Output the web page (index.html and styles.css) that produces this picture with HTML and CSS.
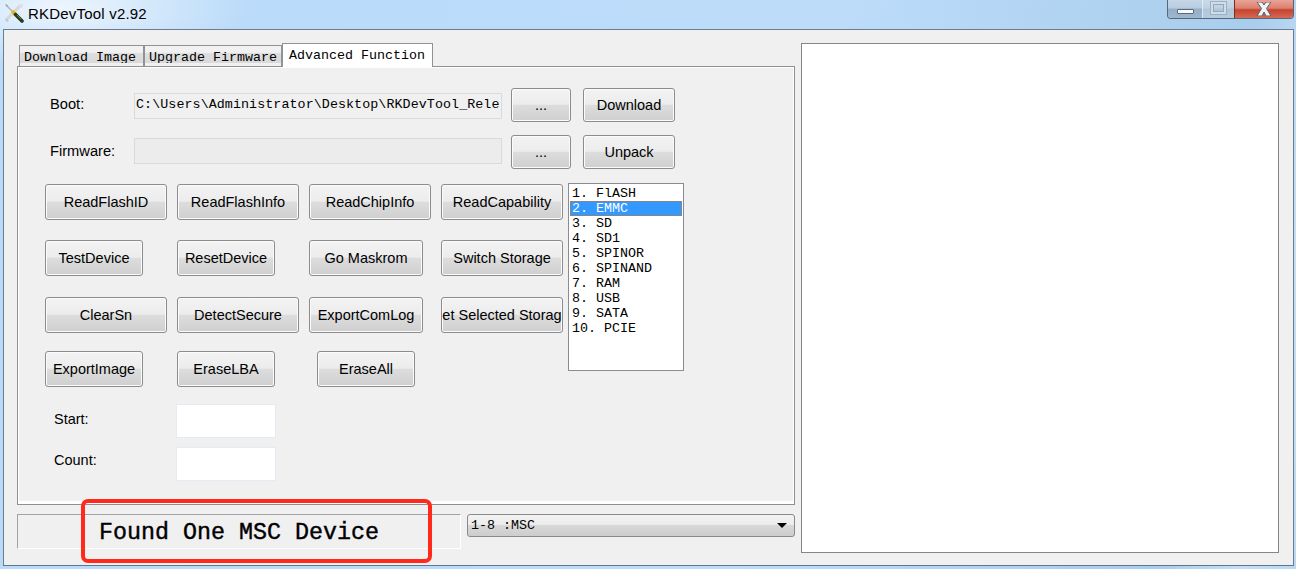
FILE: index.html
```html
<!DOCTYPE html>
<html lang="en">
<head>
<meta charset="utf-8">
<title>RKDevTool v2.92</title>
<link rel="stylesheet" href="styles.css">
</head>
<body>
<div class="desktop">
  <header class="titlebar">
    <svg class="app-icon" width="20" height="20" viewBox="0 0 20 20">
      <path d="M17 2 L3 16" stroke="#d6d8d5" stroke-width="3"/>
      <path d="M19 1 L15 2 L15 5 L18 5 Z" fill="#dcdedb"/>
      <path d="M1 17 L3 19 L5 18 L2 15 Z" fill="#c6c8c4"/>
      <path d="M2 2 L9 9" stroke="#b4b7b4" stroke-width="1.600"/>
      <path d="M1 1 L4 2 L3 4 Z" fill="#a2a5a2"/>
      <path d="M8 8 L12 12" stroke="#e2b62a" stroke-width="3.600"/>
      <path d="M11.500 11.500 L18 18" stroke="#2d3a22" stroke-width="3.600" stroke-linecap="round"/>
      <path d="M13 12 L17 16" stroke="#6f8a3a" stroke-width="1"/>
    </svg>
    <span class="app-title">RKDevTool v2.92</span>
    <div class="caption">
      <div class="cap cap-min"><span class="min-glyph"></span></div>
      <div class="cap cap-max"><span class="max-glyph"></span></div>
      <div class="cap cap-close">
        <svg width="20" height="14" viewBox="0 0 20 14"><path d="M3 0 H8 L10 3 L12 0 H17 L12.500 6.500 L17 14 H12 L10 10 L8 14 H3 L7.500 6.500 Z" fill="#f3f3f3" stroke="#56606c" stroke-width="1"/></svg>
      </div>
    </div>
  </header>

  <main class="window">
    <section class="left">
      <nav class="tabs">
        <div class="tab tab-download"><span class="tab-face">Download Image</span></div>
        <div class="tab tab-upgrade"><span class="tab-face">Upgrade Firmware</span></div>
        <div class="tab tab-active">Advanced Function</div>
      </nav>
      <div class="panel">
        <div class="file-row file-row-boot">
          <label class="lbl">Boot:</label>
          <div class="path">C:\Users\Administrator\Desktop\RKDevTool_Rele</div>
          <button class="btn">...</button>
          <button class="btn">Download</button>
        </div>
        <div class="file-row file-row-fw">
          <label class="lbl">Firmware:</label>
          <div class="path path-fw"></div>
          <button class="btn">...</button>
          <button class="btn">Unpack</button>
        </div>

        <div class="commands">
          <div class="cmd-grid">
            <button class="btn w122">ReadFlashID</button>
            <button class="btn w122">ReadFlashInfo</button>
            <button class="btn w122">ReadChipInfo</button>
            <button class="btn w122">ReadCapability</button>
            <button class="btn w98">TestDevice</button>
            <button class="btn w98">ResetDevice</button>
            <button class="btn w114">Go Maskrom</button>
            <button class="btn w122">Switch Storage</button>
            <button class="btn w122">ClearSn</button>
            <button class="btn w122">DetectSecure</button>
            <button class="btn w114">ExportComLog</button>
            <button class="btn w122">et Selected Storag</button>
            <button class="btn w98">ExportImage</button>
            <button class="btn w98">EraseLBA</button>
            <button class="btn w98 inset8">EraseAll</button>
          </div>
          <ul class="listbox">
            <li class="opt">1. FlASH</li>
            <li class="opt opt-selected">2. EMMC</li>
            <li class="opt">3. SD</li>
            <li class="opt">4. SD1</li>
            <li class="opt">5. SPINOR</li>
            <li class="opt">6. SPINAND</li>
            <li class="opt">7. RAM</li>
            <li class="opt">8. USB</li>
            <li class="opt">9. SATA</li>
            <li class="opt">10. PCIE</li>
          </ul>
        </div>

        <div class="lba">
          <label class="lbl-lba lbl-start">Start:</label>
          <div class="lba-input"></div>
          <label class="lbl-lba lbl-count">Count:</label>
          <div class="lba-input"></div>
        </div>
      </div>

      <div class="statusrow">
        <div class="status">Found One MSC Device</div>
        <div class="combo">
          <span>1-8 :MSC</span>
          <span class="arrow"></span>
        </div>
      </div>
      <div class="annotation"></div>
    </section>

    <aside class="log"></aside>
  </main>
</div>
</body>
</html>
```
FILE: styles.css
```css
* { box-sizing: border-box; }
html, body { margin: 0; padding: 0; }
body { width: 1296px; height: 569px; overflow: hidden; font-family: "Liberation Sans", Arial, sans-serif; color: #000; }

.desktop {
  width: 1296px; height: 569px; display: flex; flex-direction: column;
  background:
    radial-gradient(ellipse 190px 60px at 60px 8px, rgba(255,255,255,.75), rgba(255,255,255,0) 100%),
    linear-gradient(100deg, #b9daf9 0%, #bcdcfa 60%, #a9cdec 90%, #c4dff6 96%, #b9d9f2 100%);
}

.titlebar { height: 29px; display: flex; align-items: flex-start; position: relative; flex: none; }
.app-icon { margin: 3px 0 0 4px; flex: none; }
.app-title { margin: 5px 0 0 4px; font-size: 15px; line-height: 18px; color: #000; letter-spacing: .2px; }

.caption { margin-left: auto; margin-right: 2px; display: flex; height: 19px; border: 1px solid #57687a; border-top: 0; border-radius: 0 0 4px 4px; overflow: hidden; flex: none; }
.cap { height: 18px; display: flex; align-items: center; justify-content: center; }
.cap-min { width: 35px; background: linear-gradient(#c5d7e6 0%, #b7ccdf 45%, #93aec7 50%, #9db7cf 100%); border-right: 1px solid #dfe9f2; }
.min-glyph { width: 17px; height: 5px; margin-top: 5px; background: #fafafa; border: 1px solid #5a6a7b; border-radius: 1px; }
.cap-max { width: 32px; background: linear-gradient(#c9dae8 0%, #bfd2e2 45%, #b0c6da 50%, #b6cbde 100%); border-right: 1px solid #7a2c22; }
.max-glyph { width: 17px; height: 14px; border: 1px solid #9fb0bf; box-shadow: inset 0 0 0 2px #d0dde8, inset 0 0 0 3px #93a8ba; margin-top: -2px; }
.cap-close { width: 58px; background: linear-gradient(#e8a598 0%, #dd7f6f 45%, #c5432d 55%, #d56a55 100%); }

.window {
  height: 537px; margin: 0 2px 3px 3px; flex: none;
  background: #f0f0f0; border: 1px solid #6c7c8e; border-bottom-color: #5f7690;
  display: flex; align-items: flex-start; padding: 13px 0 0 13px; gap: 6px;
}

.left { width: 778px; position: relative; flex: none; }

.tabs { display: flex; height: 23px; align-items: flex-end; padding-left: 2px; font-family: "Liberation Mono", monospace; font-size: 13.33px; }
.tab { border: 1px solid #8e9398; border-bottom: 0; height: 21px; white-space: nowrap; overflow: hidden; }
.tab-face { display: block; height: 17px; line-height: 24px; overflow: hidden; background: linear-gradient(#f3f3f3 0%, #efefef 38%, #dedede 42%, #d9d9d9 100%); }
.tab-download { width: 125px; }
.tab-download .tab-face { padding-left: 4px; }
.tab-upgrade { width: 138px; }
.tab-upgrade .tab-face { padding-left: 4px; }
.tab-active { width: 151px; height: 24px; background: #fff; line-height: 24px; padding-left: 6px; position: relative; z-index: 2; margin-bottom: -1px; }

.panel {
  height: 439px; border: 1px solid #8d9195; box-shadow: inset 1px 1px 0 #fff, inset -1px -3px 0 #fff;
  background: #f0f0f0; padding: 21px 0 0 27px; position: relative;
}

.file-row { display: grid; grid-template-columns: 84px 368px 69px 104px; height: 34px; margin-bottom: 13px; align-items: center; margin-left: 5px; }
.file-row-fw { margin-bottom: 15px; }
.file-row .btn:nth-of-type(1) { margin-left: 9px; width: 60px; }
.file-row .btn:last-child { margin-left: 12px; width: 92px; }
.lbl { font-size: 14.67px; margin-top: -2px; }
.path { height: 26px; border: 1px solid #dadada; background: #f0f0f0; font-family: "Liberation Mono", monospace; font-size: 13.33px; letter-spacing: .08px; line-height: 22px; padding-left: 1px; white-space: nowrap; overflow: hidden; margin-top: 2px; }
.path-fw { margin-top: -2px; background: #ececec; }

.btn {
  height: 34px; padding: 0; margin: 0; border: 1px solid #8c8c8c; border-radius: 3px;
  background: linear-gradient(#f3f3f3 0%, #ececec 48%, #dddddd 50%, #cfcfcf 100%);
  box-shadow: inset 0 0 0 1px #fbfbfb;
  font-family: "Liberation Sans", sans-serif; font-size: 14.5px; color: #000;
  display: flex; align-items: center; justify-content: center; white-space: nowrap; overflow: hidden;
}

.commands { display: flex; align-items: flex-start; }
.cmd-grid { display: grid; grid-template-columns: repeat(4, 122px); column-gap: 10px; grid-template-rows: 56px 57px 54px 36px; width: 518px; flex: none; }
.cmd-grid .btn { height: 36px; }
.w122 { width: 122px; }
.w114 { width: 114px; }
.w98 { width: 98px; }
.inset8 { margin-left: 8px; }

.listbox { list-style: none; width: 116px; height: 188px; margin: -1px 0 0 5px; padding: 2px 1px 0 1px; background: #fff; border: 1px solid #8b8b94; font-family: "Liberation Mono", monospace; font-size: 13.33px; flex: none; }
.opt { height: 15px; line-height: 15.500px; padding-left: 2px; white-space: pre; }
.opt-selected { background: #3399ff; color: #fff; outline: 1px dotted #d9730d; outline-offset: -1px; }

.lba { display: grid; grid-template-columns: 122px 100px; grid-template-rows: 34px 34px; row-gap: 9px; margin-top: 17px; margin-left: 9px; align-items: center; width: 222px; }
.lbl-lba { font-size: 14.5px; }
.lbl-start { margin-top: -4px; }
.lbl-count { margin-top: -8px; }
.lba-input { height: 34px; background: #fff; border: 1px solid #e4ebf2; }

.statusrow { display: flex; margin-top: 9px; gap: 6px; align-items: flex-start; }
.status { width: 444px; height: 35px; border: 1px solid; border-color: #a3a3a3 #fff #fff #a3a3a3; padding-left: 81px; font-family: "Liberation Mono", monospace; font-size: 23.33px; line-height: 37px; white-space: nowrap; -webkit-text-stroke: .4px #000; }
.combo { width: 328px; height: 23px; border: 1px solid #8a8a8a; border-radius: 3px; background: linear-gradient(#f3f3f3 0%, #ececec 45%, #d8d8d8 50%, #cdcdcd 100%); font-family: "Liberation Mono", monospace; font-size: 13.33px; line-height: 23px; padding: 0 7px 0 3px; display: flex; align-items: center; justify-content: space-between; }
.arrow { width: 0; height: 0; border-left: 5px solid transparent; border-right: 5px solid transparent; border-top: 5px solid #000; }

.annotation { position: absolute; left: 64px; top: 456px; width: 351px; height: 64px; border: 4px solid #ff2a1c; border-radius: 7px; pointer-events: none; }

.log { width: 478px; height: 510px; background: #fff; border: 1px solid #82868c; flex: none; }
```
